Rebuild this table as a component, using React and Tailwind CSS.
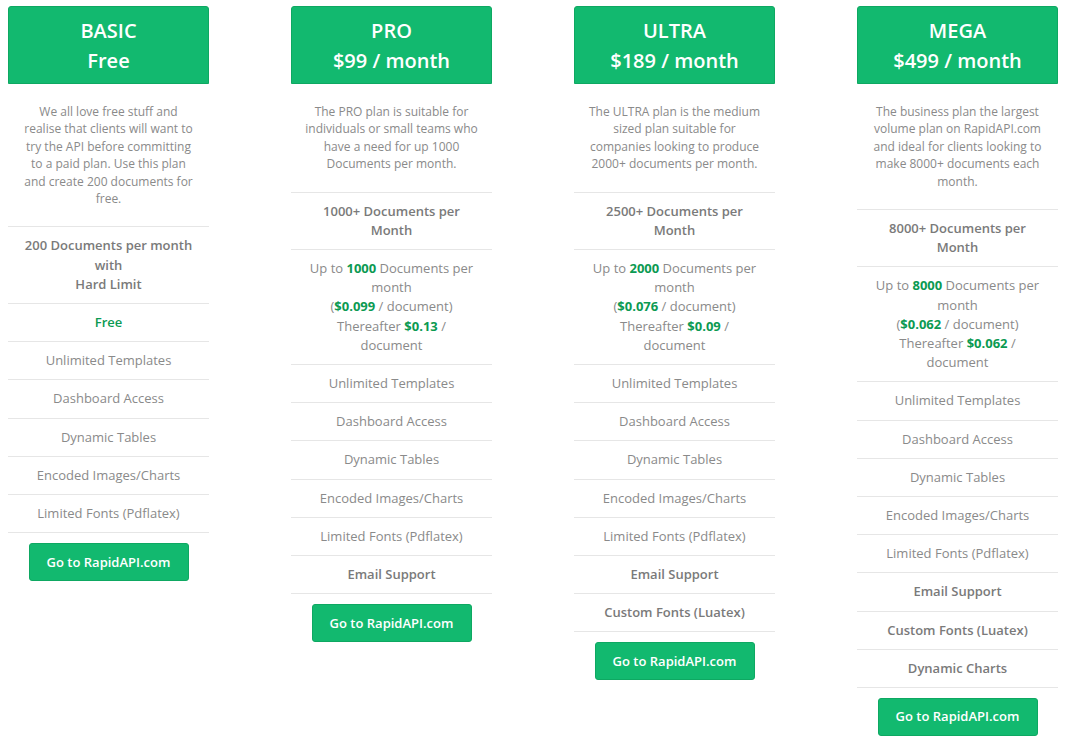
import React from "react";

const G = ({ children }) => <b className="font-bold text-[#0b9a52]">{children}</b>;

const plans = [
  {
    name: "BASIC",
    price: "Free",
    desc: "We all love free stuff and realise that clients will want to try the API before committing to a paid plan. Use this plan and create 200 documents for free.",
    rows: [
      { b: true, c: <>200 Documents per month<br />with<br />Hard Limit</> },
      { b: true, c: <span className="text-[#0b9a52]">Free</span> },
      { c: "Unlimited Templates" },
      { c: "Dashboard Access" },
      { c: "Dynamic Tables" },
      { c: "Encoded Images/Charts" },
      { c: "Limited Fonts (Pdflatex)" },
    ],
  },
  {
    name: "PRO",
    price: "$99 / month",
    desc: "The PRO plan is suitable for individuals or small teams who have a need for up 1000 Documents per month.",
    rows: [
      { b: true, c: <>1000+ Documents per<br />Month</> },
      { c: <>Up to <G>1000</G> Documents per month<br />(<G>$0.099</G> / document)<br />Thereafter <G>$0.13</G> / document</> },
      { c: "Unlimited Templates" },
      { c: "Dashboard Access" },
      { c: "Dynamic Tables" },
      { c: "Encoded Images/Charts" },
      { c: "Limited Fonts (Pdflatex)" },
      { b: true, c: "Email Support" },
    ],
  },
  {
    name: "ULTRA",
    price: "$189 / month",
    desc: "The ULTRA plan is the medium sized plan suitable for companies looking to produce 2000+ documents per month.",
    rows: [
      { b: true, c: <>2500+ Documents per<br />Month</> },
      { c: <>Up to <G>2000</G> Documents per month<br />(<G>$0.076</G> / document)<br />Thereafter <G>$0.09</G> / document</> },
      { c: "Unlimited Templates" },
      { c: "Dashboard Access" },
      { c: "Dynamic Tables" },
      { c: "Encoded Images/Charts" },
      { c: "Limited Fonts (Pdflatex)" },
      { b: true, c: "Email Support" },
      { b: true, c: "Custom Fonts (Luatex)" },
    ],
  },
  {
    name: "MEGA",
    price: "$499 / month",
    desc: "The business plan the largest volume plan on RapidAPI.com and ideal for clients looking to make 8000+ documents each month.",
    rows: [
      { b: true, c: <>8000+ Documents per<br />Month</> },
      { c: <>Up to <G>8000</G> Documents per month<br />(<G>$0.062</G> / document)<br />Thereafter <G>$0.062</G> / document</> },
      { c: "Unlimited Templates" },
      { c: "Dashboard Access" },
      { c: "Dynamic Tables" },
      { c: "Encoded Images/Charts" },
      { c: "Limited Fonts (Pdflatex)" },
      { b: true, c: "Email Support" },
      { b: true, c: "Custom Fonts (Luatex)" },
      { b: true, c: "Dynamic Charts" },
    ],
  },
];

function Plan({ p }) {
  return (
    <div className="w-[201px] flex flex-col">
      <div className="bg-[#12b96f] border border-[#0ea862] rounded-t-[3px] text-white text-center font-semibold text-[20px] leading-[30px] pt-[9px] pb-[7px]">
        <div>{p.name}</div>
        <div>{p.price}</div>
      </div>
      <div className="px-[13px] pt-[19px] pb-[19px] text-center text-[12px] leading-[17.4px] text-[#8a8a8a] border-b border-[#e6e6e6]">
        {p.desc}
      </div>
      {p.rows.map((r, i) => (
        <div
          key={i}
          className={
            "px-[15px] py-[9px] text-center text-[13px] leading-[19.2px] border-b border-[#e6e6e6] " +
            (r.b ? "font-semibold text-[#7a7a7a]" : "text-[#8a8a8a]")
          }
        >
          {r.c}
        </div>
      ))}
      <div className="flex justify-center pt-[10px]">
        <button className="w-[160px] h-[38px] bg-[#12b96f] border border-[#0ea862] rounded-[3px] text-white text-[13px] font-semibold">
          Go to RapidAPI.com
        </button>
      </div>
    </div>
  );
}

export default function App() {
  return (
    <div
      className="w-[1070px] h-[751px] bg-white flex items-start gap-[82px] pl-[8px] pt-[6px] overflow-hidden"
      style={{ fontFamily: '"Open Sans", sans-serif' }}
    >
      {plans.map((p) => (
        <Plan key={p.name} p={p} />
      ))}
    </div>
  );
}
